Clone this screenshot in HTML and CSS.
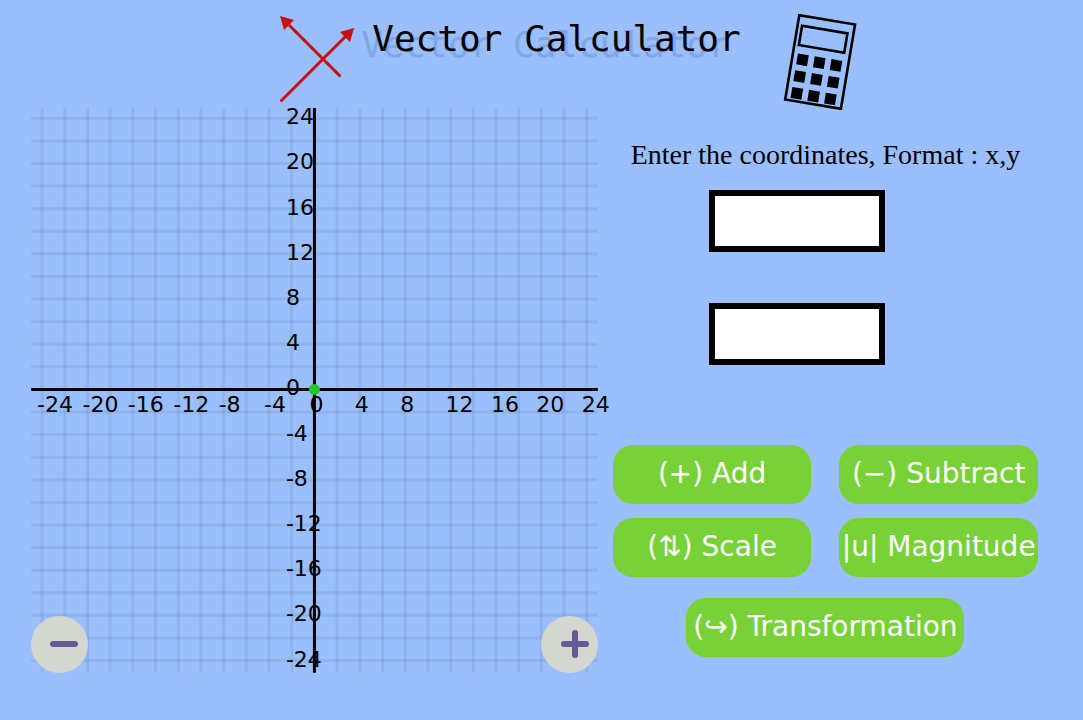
FILE: index.html
```html
<!DOCTYPE html>
<html lang="en">
<head>
<meta charset="utf-8">
<meta name="viewport" content="width=device-width, initial-scale=1">
<title>Vector Calculator</title>
<link rel="stylesheet" href="styles.css">
</head>
<body>
<header class="header">
  <svg class="logo" viewBox="0 0 76 88" aria-hidden="true">
    <g stroke="#c80f10" stroke-width="3" fill="none">
      <path d="M0.500 86.500 66 21M60.500 61.500 9 10"/>
    </g>
    <path d="M0 1 14 5 4 15ZM74 13 70 27 60 17Z" fill="#c80f10"/>
  </svg>
  <h1 class="title">Vector Calculator</h1>
  <svg class="calculator" viewBox="0 0 74 96" aria-hidden="true">
    <g transform="translate(16.300 1.200) rotate(9.500)">
      <rect width="56.500" height="85.500" fill="none" stroke="#000" stroke-width="2.600"/>
      <rect x="4.500" y="10" width="46" height="19.500" fill="none" stroke="#000" stroke-width="2.600"/>
      <path d="M5 38h11v11H5zM22 38h11v11H22zM39 38h11v11H39zM5 55h11v11H5zM22 55h11v11H22zM39 55h11v11H39zM5 72h11v11H5zM22 72h11v11H22zM39 72h11v11H39z"/>
    </g>
  </svg>
</header>
<main class="main">
  <section class="graph" aria-label="Coordinate plane">
    <svg class="plane" id="plane" viewBox="0 0 567 565">
      <g id="grid" class="grid-lines"></g>
      <path class="axis" d="M0 281.500H567M283.500 0V565"/>
      <g id="labels" class="labels"></g>
      <circle cx="283.500" cy="281.500" r="5.500" fill="#27c42b"/>
    </svg>
    <div class="zoom">
      <button class="zoom-button" type="button" aria-label="Zoom out">
        <svg viewBox="0 0 57 57"><path d="M22 28H44"/></svg>
      </button>
      <button class="zoom-button" type="button" aria-label="Zoom in">
        <svg viewBox="0 0 57 57"><path d="M23 28H45M34 17V39"/></svg>
      </button>
    </div>
  </section>
  <form class="panel">
    <p class="prompt" id="prompt">Enter the coordinates, Format : x,y</p>
    <div class="fields">
      <input class="field" type="text" aria-label="First vector" aria-describedby="prompt">
      <input class="field" type="text" aria-label="Second vector" aria-describedby="prompt">
    </div>
    <div class="operations">
      <button class="operation" type="button">(+) Add</button>
      <button class="operation" type="button">(−) Subtract</button>
      <button class="operation" type="button">(⇅) Scale</button>
      <button class="operation" type="button">|u| Magnitude</button>
    </div>
    <button class="operation operation-wide" type="button">(↪) Transformation</button>
  </form>
</main>
<script src="graph.js"></script>
</body>
</html>
```
FILE: styles.css
```css
* {
  box-sizing: border-box;
}

body {
  margin: 0;
  background: #9abffc;
  color: #000;
}

.header {
  display: flex;
  justify-content: center;
  align-items: flex-start;
  height: 108px;
  padding: 14px 0 0 54px;
}

.logo {
  width: 76px;
  height: 88px;
  margin: 1px 16px 0 0;
}

.title {
  margin: 0 42px 0 0;
  font: 36px/50px "DejaVu Sans Mono", monospace;
  text-shadow: -11px 6px 1px rgba(30, 60, 130, 0.2);
  white-space: nowrap;
}

.calculator {
  width: 74px;
  height: 96px;
}

.main {
  display: grid;
  grid-template-columns: 4fr 3fr;
  column-gap: 15px;
  align-items: start;
  padding: 0 45px 32px 31px;
}

.graph {
  position: relative;
}

.plane {
  display: block;
  width: 100%;
  overflow: visible;
}

.grid-lines {
  stroke: #142850;
  stroke-opacity: 0.08;
  stroke-width: 3;
}

.axis {
  stroke: #000;
  stroke-width: 3;
}

.labels {
  font: 22px "DejaVu Sans", sans-serif;
}

.zoom {
  position: absolute;
  inset: auto 0 0;
  display: flex;
  justify-content: space-between;
}

.zoom-button {
  width: 57px;
  height: 57px;
  padding: 0;
  border: 0;
  border-radius: 50%;
  background: #d4d7d0;
}

.zoom-button svg {
  display: block;
  fill: none;
  stroke: #665a96;
  stroke-width: 6;
  stroke-linecap: round;
}

.panel {
  display: flex;
  flex-direction: column;
  align-items: center;
  padding-top: 31px;
}

.prompt {
  margin: 0 0 19px;
  font: 28px/32px "Liberation Serif", serif;
  white-space: nowrap;
}

.fields {
  display: grid;
  row-gap: 51px;
  margin-bottom: 80px;
  padding-right: 56px;
}

.field {
  width: 176px;
  height: 62px;
  padding: 0 8px;
  border: 6px solid #000;
  border-radius: 0;
  background: #fff;
  font: 28px "Liberation Serif", serif;
}

.operations {
  display: grid;
  grid-template-columns: 1fr 1fr;
  gap: 14px 28px;
  width: 100%;
  margin-bottom: 21px;
}

.operation {
  min-width: 0;
  height: 59px;
  padding: 0 0 2px;
  border: 0;
  border-radius: 20px;
  background: #78d237;
  color: #fff;
  font: 28px "DejaVu Sans", sans-serif;
  white-space: nowrap;
}

.operation-wide {
  width: 278px;
}
```
FILE: graph.js
```js
const ns = "http://www.w3.org/2000/svg";
const center = { x: 283.5, y: 281.5 };
const step = { x: 22.7, y: 22.6 };
const grid = document.getElementById("grid");
const labels = document.getElementById("labels");

function line(d) {
  const path = document.createElementNS(ns, "path");
  path.setAttribute("d", d);
  grid.append(path);
}

function label(x, y, value) {
  const text = document.createElementNS(ns, "text");
  text.setAttribute("x", x);
  text.setAttribute("y", y);
  text.textContent = value;
  labels.append(text);
}

for (let i = -12; i <= 12; i++) {
  if (i === 0) continue;
  line(`M${center.x + i * step.x} 0V565`);
  line(`M0 ${center.y + i * step.y}H567`);
}

for (let v = -24; v <= 24; v += 4) {
  label(center.x + (v / 2) * step.x - 5, 304, v);
  label(255, center.y + 6 - (v / 2) * step.y, v);
}
```
